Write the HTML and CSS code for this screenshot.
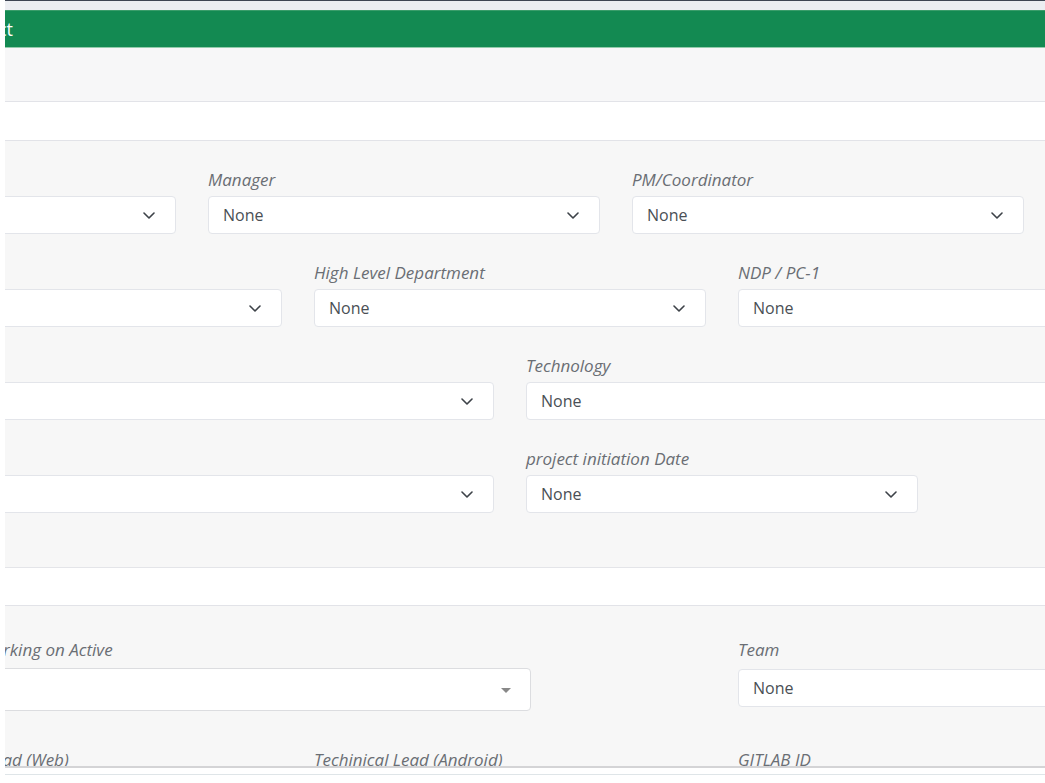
FILE: index.html
```html
<!DOCTYPE html>
<html>
<head>
<meta charset="utf-8">
<link rel="stylesheet" href="styles.css">
</head>
<body>
<div class="page">
  <div class="topline"></div>
  <div class="topgap"></div>
  <div class="header"><div class="title">Edit Project</div></div>
  <div class="subbar"></div>
  <div class="band"></div>

  <div class="section s1">
    <div class="grid">
      <div class="field c2"><div class="label">&nbsp;</div><div class="select"><span class="val"></span><svg class="chev" viewBox="0 0 12 7"><path d="M1 1l5 5 5-5"/></svg></div></div>
      <div class="field c6"><div class="label">Manager</div><div class="select"><span class="val">None</span><svg class="chev" viewBox="0 0 12 7"><path d="M1 1l5 5 5-5"/></svg></div></div>
      <div class="field c10"><div class="label">PM/Coordinator</div><div class="select"><span class="val">None</span><svg class="chev" viewBox="0 0 12 7"><path d="M1 1l5 5 5-5"/></svg></div></div>

      <div class="field c3"><div class="label">&nbsp;</div><div class="select"><span class="val"></span><svg class="chev" viewBox="0 0 12 7"><path d="M1 1l5 5 5-5"/></svg></div></div>
      <div class="field c7"><div class="label">High Level Department</div><div class="select"><span class="val">None</span><svg class="chev" viewBox="0 0 12 7"><path d="M1 1l5 5 5-5"/></svg></div></div>
      <div class="field c11"><div class="label">NDP / PC-1</div><div class="select"><span class="val">None</span></div></div>

      <div class="field c3w"><div class="label">&nbsp;</div><div class="select"><span class="val"></span><svg class="chev" viewBox="0 0 12 7"><path d="M1 1l5 5 5-5"/></svg></div></div>
      <div class="field c9w"><div class="label">Technology</div><div class="select"><span class="val">None</span></div></div>

      <div class="field c3w"><div class="label">&nbsp;</div><div class="select"><span class="val"></span><svg class="chev" viewBox="0 0 12 7"><path d="M1 1l5 5 5-5"/></svg></div></div>
      <div class="field c9w"><div class="label">project initiation Date</div><div class="select narrow"><span class="val">None</span><svg class="chev" viewBox="0 0 12 7"><path d="M1 1l5 5 5-5"/></svg></div></div>
    </div>
  </div>

  <div class="band band2"></div>

  <div class="section s2">
    <div class="row">
      <div class="field work"><div class="label">Working on Active</div><div class="select s2sel"><span class="val"></span><span class="caret"></span></div></div>
      <div class="field team"><div class="label">Team</div><div class="select"><span class="val">None</span></div></div>
    </div>
    <div class="grid last">
      <div class="field c3"><div class="label shift">Techinical Lead (Web)</div></div>
      <div class="field c7"><div class="label">Techinical Lead (Android)</div></div>
      <div class="field c11"><div class="label">GITLAB ID</div></div>
    </div>
  </div>

  <div class="bottom"></div>
</div>
</body>
</html>
```

FILE: styles.css
```css
* { box-sizing: border-box; }
html, body { margin: 0; padding: 0; background: #ffffff; }
body { font-family: "Open Sans", "Noto Sans", sans-serif; }

.page {
  margin-left: 5px;
  height: 783px;
  overflow: hidden;
}

.topline { height: 1px; background: #3e4553; }
.topgap { height: 9px; background: #eceef2; }

.header {
  height: 38px;
  background: #138a52;
  border-top: 1px solid #3a9d6a;
  border-bottom: 1px solid #94ccac;
  display: flex;
  align-items: center;
  overflow: hidden;
}
.header .title {
  flex: none;
  width: 200px;
  margin-left: -187px;
  padding-right: 5px;
  text-align: right;
  color: #ffffff;
  font-size: 18px;
  line-height: 36px;
}

.subbar {
  height: 54px;
  background: #f7f7f8;
  border-bottom: 1px solid #e2e3e8;
}

.band {
  height: 39px;
  background: #ffffff;
  border-bottom: 1px solid #e2e3e8;
}
.band2 { height: 38px; }

.section { background: #f7f7f7; overflow: hidden; }
.s1 {
  height: 427px;
  padding-top: 27px;
  border-bottom: 1px solid #e4e5e9;
}
.s2 {
  height: 162px;
  padding-top: 32px;
  border-bottom: 2px solid #d4d4d6;
}

.grid {
  display: grid;
  grid-template-columns: repeat(16, 106px);
  width: 1696px;
  margin-left: -343px;
  row-gap: 27px;
}

.field { padding: 0 16px; }
.c2 { grid-column: 2 / span 4; }
.c3 { grid-column: 3 / span 4; }
.c6 { grid-column: 6 / span 4; }
.c7 { grid-column: 7 / span 4; }
.c10 { grid-column: 10 / span 4; }
.c11 { grid-column: 11 / span 4; }
.c3w { grid-column: 3 / span 6; }
.c9w { grid-column: 9 / span 6; }

.label {
  font-style: italic;
  font-size: 17px;
  line-height: 24px;
  height: 24px;
  color: #6a6e74;
  margin-bottom: 4px;
  white-space: nowrap;
}
.label.shift { margin-left: 17px; }

.select {
  position: relative;
  height: 38px;
  background: #ffffff;
  border: 1px solid #e3e5ea;
  border-radius: 4px;
  display: flex;
  align-items: center;
  padding: 0 14px;
}
.select.narrow { width: 392px; }
.val {
  font-size: 16px;
  color: #4a4f55;
}
.chev {
  position: absolute;
  right: 20px;
  top: 15px;
  width: 12px;
  height: 7px;
  fill: none;
  stroke: #3d4248;
  stroke-width: 1.6;
  stroke-linecap: round;
  stroke-linejoin: round;
}

.row { display: flex; }
.work {
  flex: none;
  width: 552px;
  margin-left: -26px;
  padding: 0;
}
.work .label { margin-bottom: 6px; }
.team {
  flex: none;
  width: 392px;
  margin-left: 207px;
  padding: 0;
}
.team .label { margin-bottom: 7px; }
.s2sel {
  height: 43px;
  border: 1px solid #dcdde0;
}
.caret {
  position: absolute;
  right: 19px;
  top: 19px;
  width: 0;
  height: 0;
  border-left: 5px solid transparent;
  border-right: 5px solid transparent;
  border-top: 5px solid #888888;
}

.last { margin-top: 37px; }

.bottom {
  height: 20px;
  background: #ffffff;
  border-top: 6px solid #ffffff;
  position: relative;
}
.bottom::before {
  content: "";
  display: block;
  height: 1px;
  background: #dfe5e8;
}
```
